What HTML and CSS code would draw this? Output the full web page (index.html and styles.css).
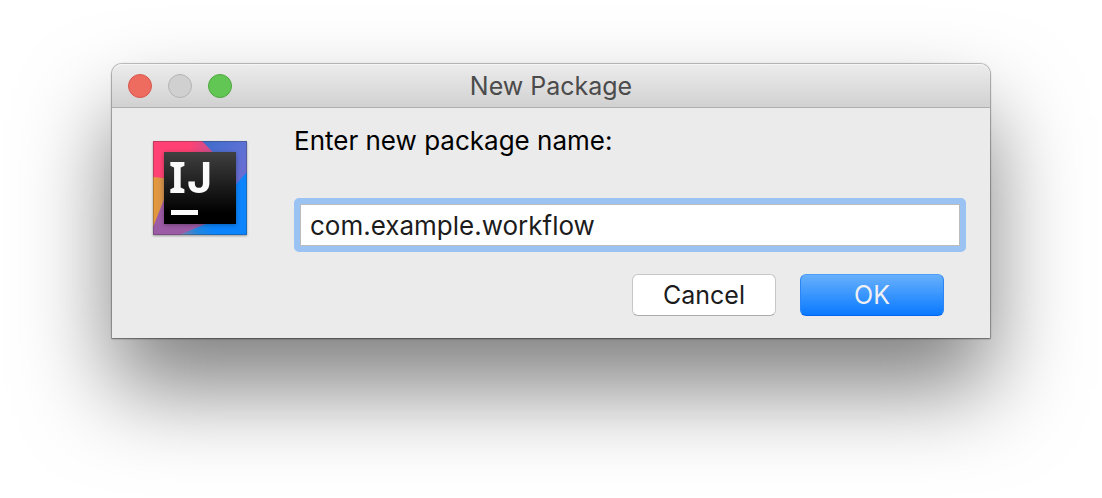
FILE: index.html
```html
<!DOCTYPE html>
<html lang="en">
<head>
<meta charset="utf-8">
<title>New Package</title>
<link rel="stylesheet" href="styles.css">
</head>
<body>
<section class="window" role="dialog" aria-labelledby="dialog-title">
  <header class="titlebar">
    <div class="controls">
      <button class="control control-close" type="button" aria-label="Close"></button>
      <button class="control control-minimize" type="button" aria-label="Minimize" disabled></button>
      <button class="control control-zoom" type="button" aria-label="Zoom"></button>
    </div>
    <h1 class="title" id="dialog-title">New Package</h1>
  </header>
  <form class="content">
    <svg class="logo" viewBox="0 0 94 94" aria-hidden="true">
      <defs>
        <linearGradient id="pink" x1="0" y1="0" x2="1" y2="0">
          <stop offset="0.6" stop-color="#ff4173"/><stop offset="1" stop-color="#c9508f"/>
        </linearGradient>
        <linearGradient id="blue" x1="0" y1="0" x2="1" y2="1">
          <stop offset="0" stop-color="#3b6cc8"/><stop offset="0.5" stop-color="#5b70d4"/><stop offset="1" stop-color="#6f6bd0"/>
        </linearGradient>
        <linearGradient id="azure" x1="0" y1="1" x2="0.5" y2="0.85">
          <stop offset="0" stop-color="#9a5fa6"/><stop offset="0.1" stop-color="#7180b2"/><stop offset="0.5" stop-color="#2486dc"/><stop offset="1" stop-color="#0b84fc"/>
        </linearGradient>
        <linearGradient id="orange" x1="0" y1="0" x2="1" y2="0">
          <stop offset="0" stop-color="#e79a38"/><stop offset="1" stop-color="#c78a60"/>
        </linearGradient>
        <linearGradient id="black" x1="0" y1="0" x2="0" y2="1">
          <stop offset="0" stop-color="#404040"/><stop offset="0.85" stop-color="#000"/>
        </linearGradient>
      </defs>
      <rect width="94" height="94" fill="#9b5ba5"/>
      <path d="M0 0H50L60 12L20 50L0 36Z" fill="url(#pink)"/>
      <path d="M0 36L20 38L12 56L0 86Z" fill="url(#orange)"/>
      <path d="M49 0H94V34L82 46L60 11Z" fill="url(#blue)"/>
      <path d="M94 31L78 49L55 82L26 94H94Z" fill="url(#azure)"/>
      <rect x="0.5" y="0.5" width="93" height="93" fill="none" stroke="#333" stroke-opacity="0.3"/>
      <rect class="logo-plate" x="11" y="11" width="72" height="72" fill="url(#black)"/>
      <text class="logo-i" x="16" y="52">I</text>
      <text class="logo-j" x="34" y="52">J</text>
      <rect x="18" y="69" width="27" height="5" fill="#fafafa"/>
    </svg>
    <div class="fields">
      <label class="label" for="package-name">Enter new package name:</label>
      <input class="input" id="package-name" type="text" value="com.example.workflow" spellcheck="false">
      <div class="actions">
        <button class="button" type="button">Cancel</button>
        <button class="button button-primary" type="submit">OK</button>
      </div>
    </div>
  </form>
</section>
</body>
</html>
```
FILE: styles.css
```css
* {
  box-sizing: border-box;
}

body {
  min-height: 100vh;
  margin: 0;
  padding: 64px 112px;
  background: #fff;
  color: #000;
  font: 26px/32px Inter, "Liberation Sans", sans-serif;
}

.window {
  border-radius: 10px 10px 0 0;
  background: #ebebeb;
  box-shadow:
    0 0 1px 1px rgba(0, 0, 0, 0.26),
    0 1px 2px rgba(0, 0, 0, 0.3),
    0 50px 90px rgba(0, 0, 0, 0.5);
}

.titlebar {
  display: grid;
  grid-template-columns: 1fr auto 1fr;
  align-items: center;
  height: 44px;
  padding: 0 16px;
  border-bottom: 1px solid #b0b0b0;
  border-radius: 10px 10px 0 0;
  background: linear-gradient(#ececec, #d1d1d1);
  box-shadow: inset 0 1px #f6f6f6;
}

.controls {
  display: flex;
  gap: 16px;
}

.control {
  width: 24px;
  height: 24px;
  padding: 0;
  border: 1px solid;
  border-radius: 50%;
}

.control-close {
  border-color: #d8574c;
  background: #ee6b60;
}

.control-minimize {
  border-color: #b4b4b4;
  background: #d0d0d0;
}

.control-zoom {
  border-color: #4fa73f;
  background: #62c655;
}

.title {
  margin: 0;
  color: #4b4b4b;
  font-size: 25px;
  font-weight: 400;
}

.content {
  display: flex;
  gap: 47px;
  padding: 17px 24px 22px 41px;
}

.logo {
  flex: none;
  width: 94px;
  height: 94px;
  margin-top: 16px;
  filter: drop-shadow(0 1px 1px rgba(0, 0, 0, 0.35));
}

.logo-plate {
  filter: drop-shadow(0 1px 2px rgba(0, 0, 0, 0.3));
}

.logo-i,
.logo-j {
  fill: #fafafa;
  font-size: 43px;
  font-weight: 700;
}

.logo-i {
  font-family: "Noto Sans", sans-serif;
}

.logo-j {
  font-family: Inter, sans-serif;
}

.fields {
  display: flex;
  flex: 1;
  flex-direction: column;
  min-width: 0;
}

.label {
  margin-bottom: 41px;
}

.input {
  width: 100%;
  height: 54px;
  padding: 0 10px;
  border: 6px solid #9ac3f4;
  border-radius: 5px;
  outline: none;
  background: #fff;
  box-shadow: inset 0 0 0 1px #bcbcbc;
  color: #1c1c1c;
  font: inherit;
}

.actions {
  display: flex;
  justify-content: flex-end;
  gap: 24px;
  margin-top: 22px;
  padding-right: 22px;
}

.button {
  width: 144px;
  height: 42px;
  padding: 0;
  border: 1px solid #c6c6c6;
  border-bottom-color: #acacac;
  border-radius: 6px;
  background: #fff;
  color: #1c1c1c;
  font: inherit;
  font-size: 25px;
}

.button-primary {
  border-color: #4a9df8 #2b85f6 #0763ef;
  background: linear-gradient(#67b0fc, #0a7aff);
  color: #f0f0f4;
}
```
